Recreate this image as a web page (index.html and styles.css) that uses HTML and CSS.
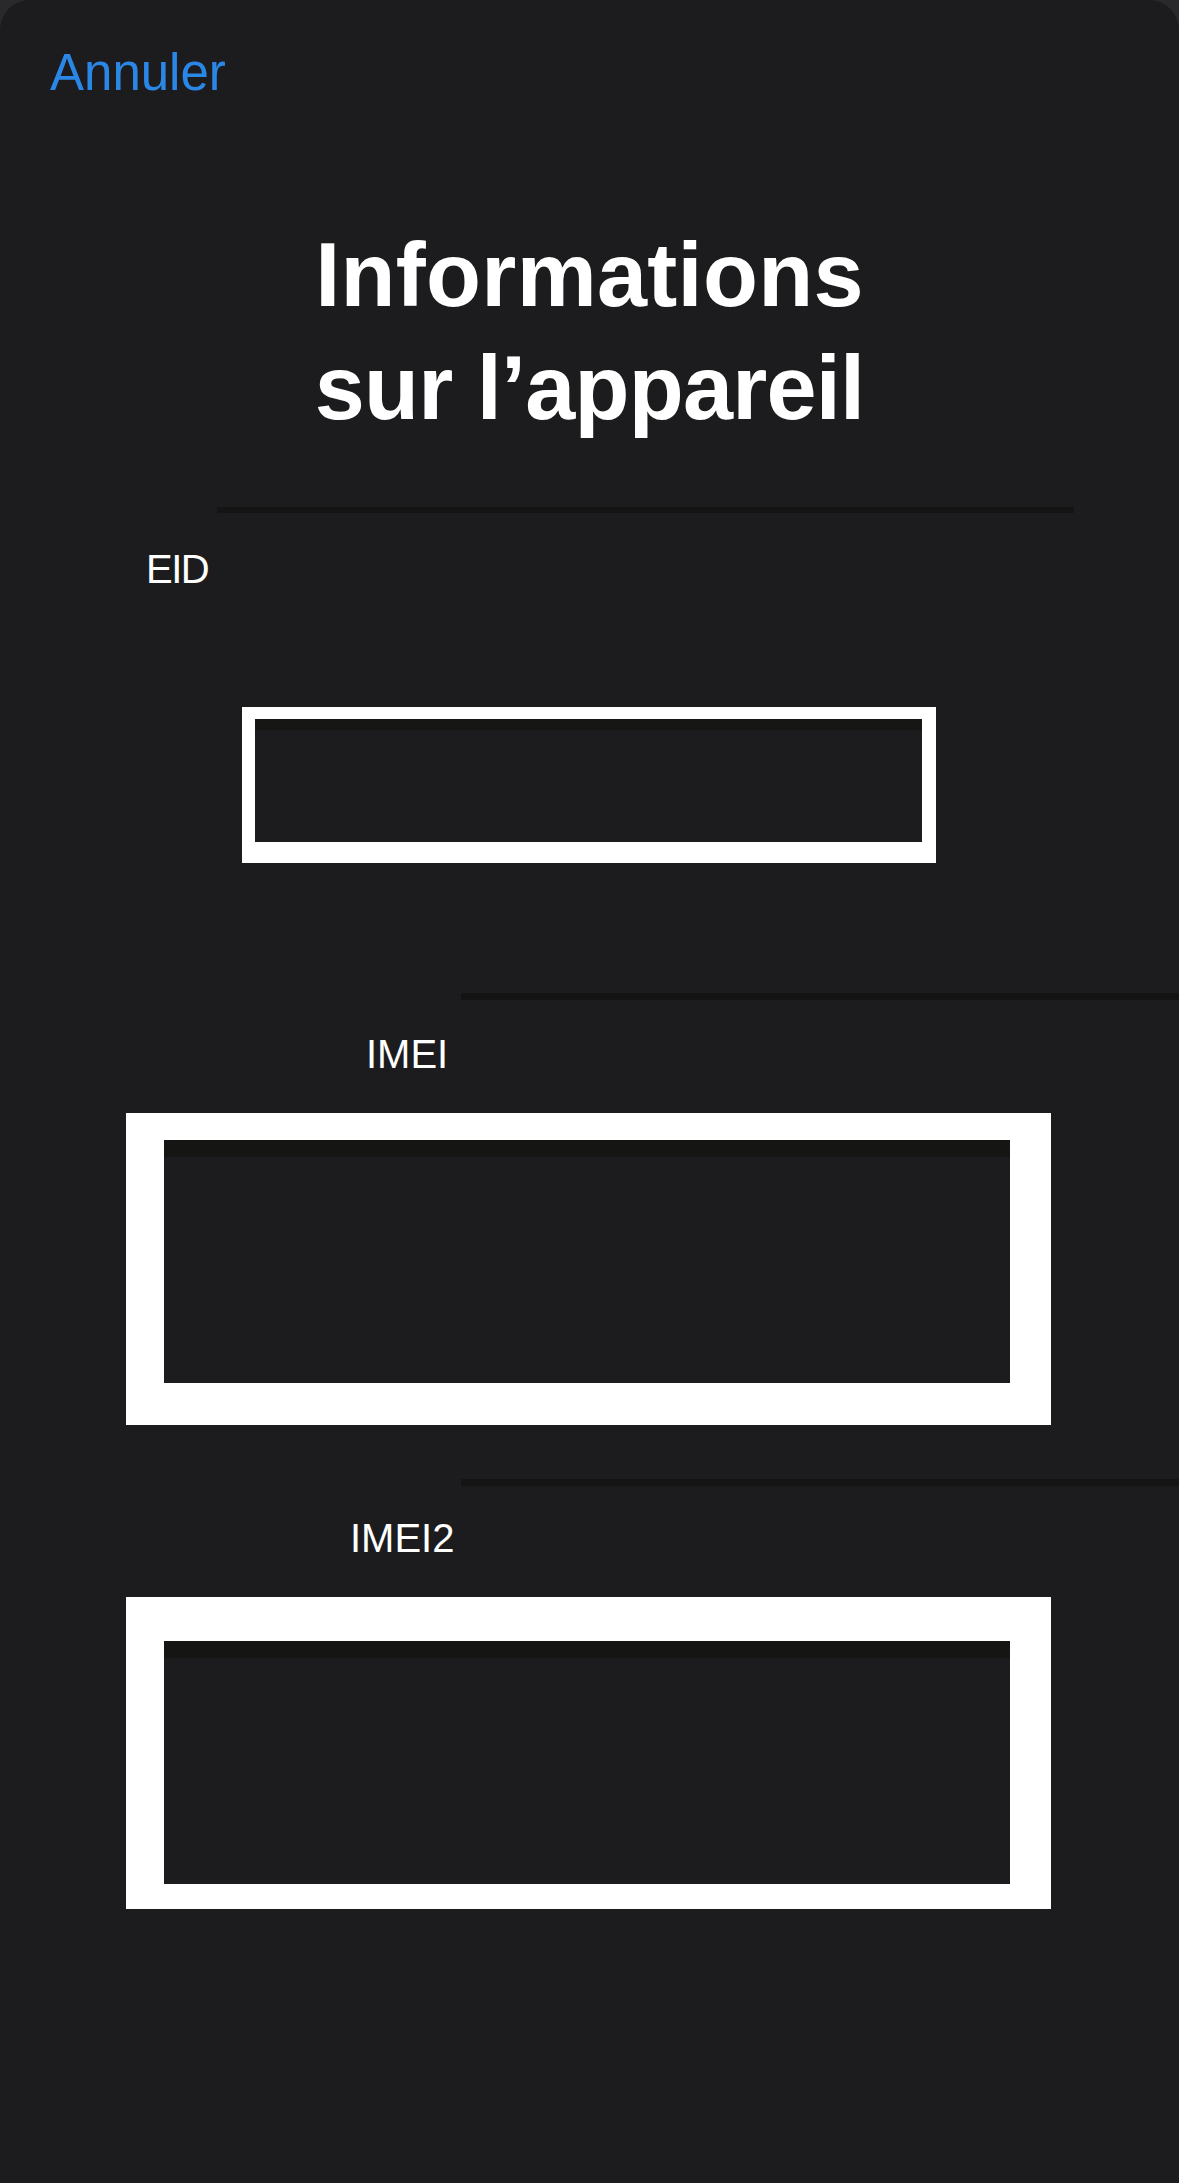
FILE: index.html
```html
<!DOCTYPE html>
<html lang="fr">
<head>
<meta charset="utf-8">
<title>Informations sur l’appareil</title>
<link rel="stylesheet" href="styles.css">
</head>
<body>
<div class="sheet">
  <header class="nav">
    <span class="cancel">Annuler</span>
  </header>
  <h1 class="title"><span class="title-line1">Informations</span><br><span class="title-line2">sur l’appareil</span></h1>

  <div class="sep sep-first"></div>
  <div class="label label-eid">EID</div>
  <div class="box box-eid"></div>

  <div class="sep sep-imei"></div>
  <div class="label label-imei">IMEI</div>
  <div class="box box-imei"></div>

  <div class="sep sep-imei2"></div>
  <div class="label label-imei2">IMEI2</div>
  <div class="box box-imei2"></div>
</div>
</body>
</html>
```

FILE: styles.css
```css
html, body {
  margin: 0;
  padding: 0;
  background: #29292b;
}

.sheet {
  width: 1179px;
  height: 2183px;
  background: #1c1c1e;
  border-radius: 30px 30px 0 0;
  font-family: "Liberation Sans", Arial, sans-serif;
  color: #ffffff;
  display: flex;
  flex-direction: column;
  align-items: flex-start;
  overflow: hidden;
}

.nav {
  padding: 42px 0 0 50px;
  height: 61px;
}

.cancel {
  font-size: 51px;
  line-height: 61px;
  color: #2b87e6;
  display: block;
}

.title {
  margin: 116px 0 0 0;
  align-self: stretch;
  text-align: center;
  font-size: 90px;
  line-height: 113px;
  font-weight: 700;
}

.title-line1 {
  letter-spacing: 0.3px;
}

.title-line2 {
  letter-spacing: -0.75px;
}

.sep {
  background: #141414;
}

.sep-first {
  margin: 62px 0 0 217px;
  width: 857px;
  height: 6px;
}

.sep-imei {
  margin: 130px 0 0 461px;
  width: 718px;
  height: 7px;
}

.sep-imei2 {
  margin: 54px 0 0 461px;
  width: 718px;
  height: 7px;
}

.label {
  font-size: 40px;
  line-height: 48px;
  font-weight: 400;
}

.label-eid {
  margin: 32px 0 0 146px;
  letter-spacing: -1.5px;
}

.label-imei {
  margin: 30px 0 0 366px;
}

.label-imei2 {
  margin: 28px 0 0 350px;
}

.box {
  box-sizing: border-box;
  border-style: solid;
  border-color: #ffffff;
}

.box-eid {
  margin: 114px 0 0 242px;
  width: 694px;
  height: 156px;
  border-width: 12px 14px 21px 13px;
  background: linear-gradient(#161615 0, #161615 11px, #1c1c1e 11px);
}

.box-imei {
  margin: 35px 0 0 126px;
  width: 925px;
  height: 312px;
  border-width: 27px 41px 42px 38px;
  background: linear-gradient(#151614 0, #151614 17px, #1c1c1e 17px);
}

.box-imei2 {
  margin: 35px 0 0 126px;
  width: 925px;
  height: 312px;
  border-width: 44px 41px 25px 38px;
  background: linear-gradient(#151614 0, #151614 17px, #1c1c1e 17px);
}
```
